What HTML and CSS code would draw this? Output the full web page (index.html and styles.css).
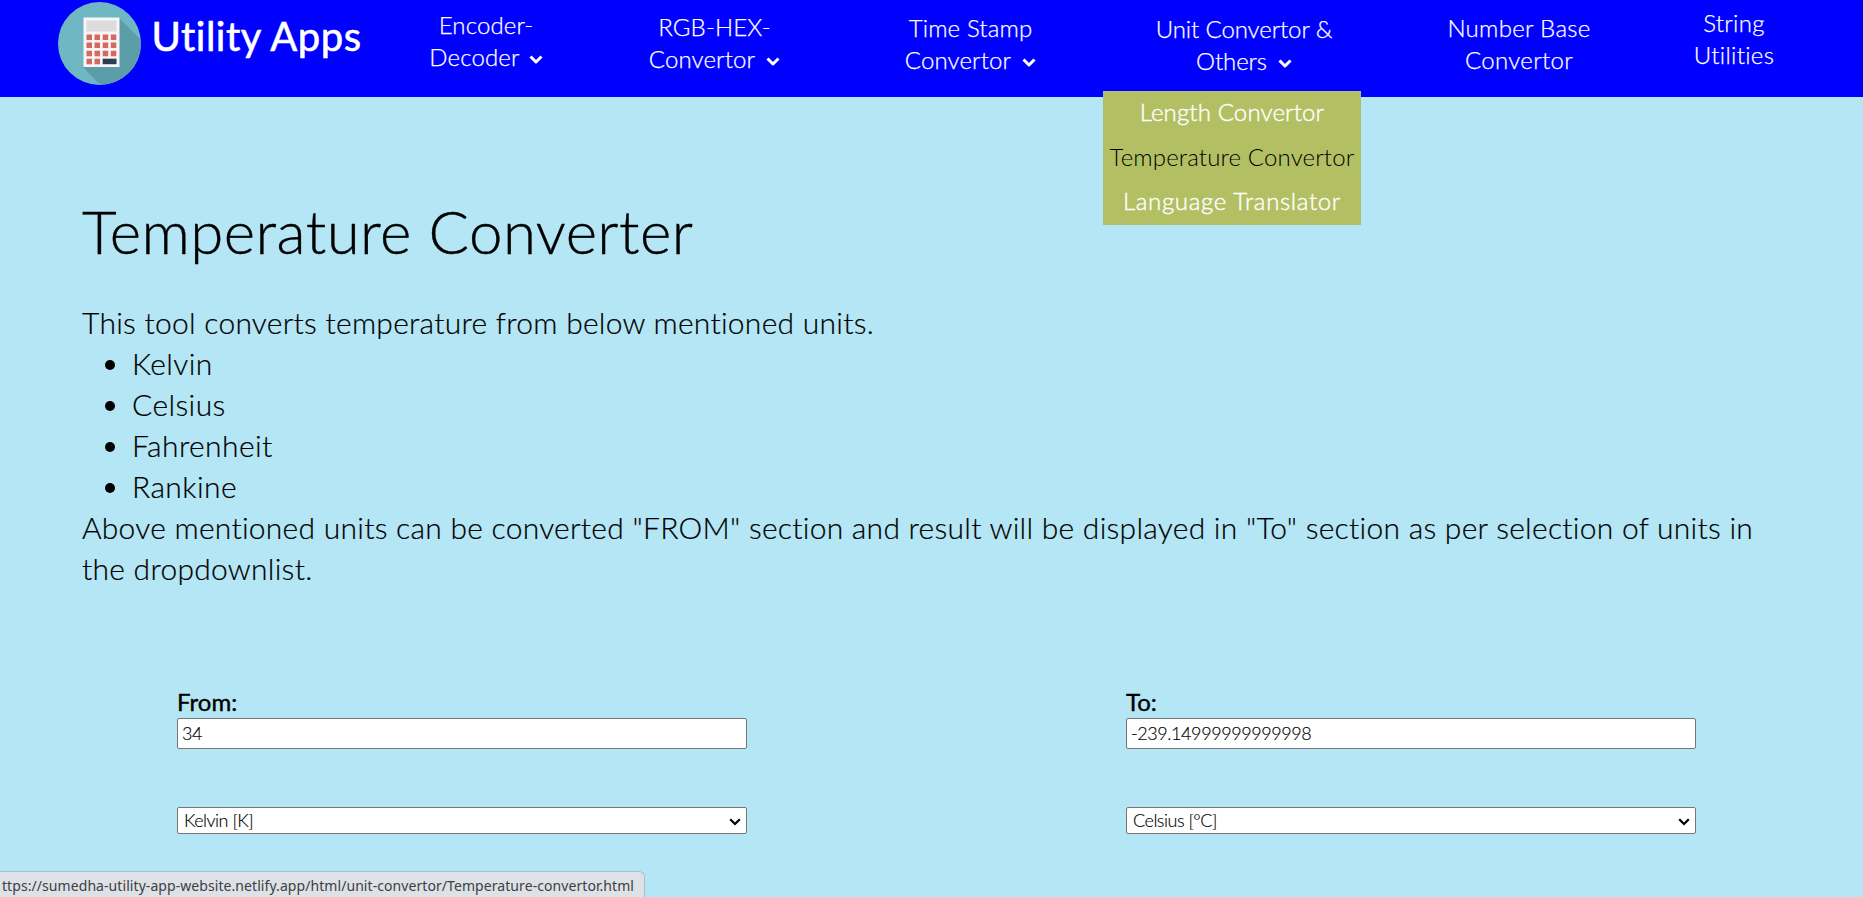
FILE: index.html
```html
<!DOCTYPE html>
<html lang="en">
<head>
<meta charset="utf-8">
<title>Temperature Converter</title>
<link rel="stylesheet" href="styles.css">
</head>
<body>
<header class="header">
  <a class="brand">
    <svg class="logo" viewBox="0 0 83 83" width="83" height="83">
      <defs><clipPath id="disc"><circle cx="41.5" cy="41.5" r="41.5"/></clipPath></defs>
      <g clip-path="url(#disc)">
        <rect width="83" height="83" fill="#6fb8c3"/>
        <path d="M61 16 L88 43 V88 H47 L25 65 Z" fill="#5b9da8"/>
        <rect x="25.5" y="15.5" width="36" height="49.5" fill="#f7f5f5"/>
        <rect x="28.5" y="18.5" width="30" height="11" fill="#dcdbdd"/>
        <g fill="#d5695f">
          <path d="M28.5 32.5h5.5v5.500h-5.500zM36.500 32.500h5.500v5.500h-5.500zM44.700 32.500h5.500v5.500h-5.500zM52.800 32.500h5.500v5.500h-5.500z"/>
          <path d="M28.5 40.5h5.5v5.500h-5.500zM36.500 40.500h5.500v5.500h-5.500zM44.700 40.500h5.500v5.500h-5.500zM52.800 40.500h5.500v5.500h-5.500z"/>
          <path d="M28.5 48.700h5.5v5.500h-5.500zM36.500 48.700h5.500v5.500h-5.500zM44.700 48.700h5.500v5.500h-5.500zM52.800 48.700h5.500v5.500h-5.500z"/>
          <path d="M28.5 56.700h5.5v5.500h-5.500zM36.500 56.700h5.500v5.500h-5.500z"/>
        </g>
        <rect x="44.700" y="56.700" width="13.800" height="5.500" fill="#2c3e50"/>
      </g>
    </svg>
    <span class="brand-name">Utility Apps</span>
  </a>
  <nav class="nav">
    <div class="item encoder">Encoder-<br>Decoder<svg class="chev" viewBox="0 0 14 9"><path d="M1.500 1.500 7 7 12.500 1.500"/></svg></div>
    <div class="item rgb">RGB-HEX-<br>Convertor<svg class="chev wide" viewBox="0 0 14 9"><path d="M1.500 1.500 7 7 12.500 1.500"/></svg></div>
    <div class="item time">Time Stamp<br>Convertor<svg class="chev wide" viewBox="0 0 14 9"><path d="M1.500 1.500 7 7 12.500 1.500"/></svg></div>
    <div class="item unit">Unit Convertor &amp;<br>Others<svg class="chev wide" viewBox="0 0 14 9"><path d="M1.500 1.500 7 7 12.500 1.500"/></svg>
      <div class="dropdown"><a>Length Convertor</a><a class="active">Temperature Convertor</a><a class="language">Language Translator</a></div>
    </div>
    <div class="item number">Number Base<br>Convertor</div>
    <div class="item string">String<br>Utilities</div>
  </nav>
</header>
<main class="main">
  <h1 class="title">Temperature Converter</h1>
  <div class="intro">
    <p>This tool converts temperature from below mentioned units.</p>
    <ul class="units"><li>Kelvin</li><li>Celsius</li><li>Fahrenheit</li><li>Rankine</li></ul>
    <p>Above mentioned units can be converted "FROM" section and result will be displayed in "To" section as per selection of units in<br>the dropdownlist.</p>
  </div>
  <form class="form">
    <div class="column">
      <label class="label" for="from">From:</label>
      <input class="field" id="from" value="34">
      <div class="picker"><select class="select"><option>Kelvin [K]</option></select><svg class="arrow" viewBox="0 0 12 8"><path d="M1.200 1.200 6 6 10.800 1.200"/></svg></div>
    </div>
    <div class="column">
      <label class="label" for="to">To:</label>
      <input class="field" id="to" value="-239.14999999999998">
      <div class="picker"><select class="select"><option>Celsius [°C]</option></select><svg class="arrow" viewBox="0 0 12 8"><path d="M1.200 1.200 6 6 10.800 1.200"/></svg></div>
    </div>
  </form>
</main>
<div class="status">ttps://sumedha-utility-app-website.netlify.app/html/unit-convertor/Temperature-convertor.html</div>
</body>
</html>
```
FILE: styles.css
```css
* { box-sizing: border-box; margin: 0; padding: 0; }
body { height: 897px; overflow: hidden; background: #b5e6f5; color: #000; font-family: Lato, "Open Sans", sans-serif; font-weight: 300; }
.header { display: flex; height: 97px; background: #0000ff; color: #fff; }
.brand { display: flex; flex: none; width: 400px; padding: 2px 0 0 58px; }
.logo { display: block; flex: none; }
.brand-name { margin-left: 10.500px; font-size: 40px; line-height: 69px; font-weight: 400; letter-spacing: .5px; white-space: nowrap; -webkit-text-stroke: .6px #fff; }
.nav { display: flex; font-size: 24px; line-height: 32px; letter-spacing: .15px; text-align: center; white-space: nowrap; }
.item { position: relative; -webkit-text-stroke: .25px currentColor; }
.encoder { width: 172px; padding-top: 9px; }
.rgb { width: 285px; padding-top: 11px; }
.time { width: 227px; padding-top: 12px; }
.unit { width: 320px; padding-top: 13px; letter-spacing: -.1px; }
.number { width: 230px; padding-top: 12px; letter-spacing: .3px; }
.string { width: 200px; padding-top: 7px; letter-spacing: .3px; }
.chev { width: 14px; height: 9px; margin-left: 9px; vertical-align: 2px; fill: none; stroke: #fff; stroke-width: 3; stroke-linejoin: round; }
.chev.wide { margin-left: 11px; }
.dropdown { position: absolute; left: 19px; top: 91px; width: 258px; height: 134px; background: #b2c063; display: flex; flex-direction: column; letter-spacing: .15px; }
.dropdown a { height: 44.600px; line-height: 42px; -webkit-text-stroke-width: .4px; }
.dropdown .active { color: #000; -webkit-text-stroke: 0; }
.dropdown .language { letter-spacing: .65px; }
.main { padding: 93px 82px 0; }
.title { height: 112px; line-height: 82px; font-size: 60px; font-weight: 300; letter-spacing: .45px; -webkit-text-stroke: .4px #000; }
.intro { font-size: 30px; line-height: 41px; letter-spacing: .26px; white-space: nowrap; -webkit-text-stroke: .2px #000; }
.units { padding-left: 50px; list-style: none; letter-spacing: .4px; }
.units li::before { content: ""; display: inline-block; width: 10px; height: 10px; margin: 0 17px 0 -27px; border-radius: 50%; background: #000; vertical-align: 5px; }
.form { display: flex; gap: 379px; padding: 97px 0 0 95px; }
.column { width: 570px; display: flex; flex-direction: column; }
.label { height: 32px; line-height: 32px; font-size: 24px; font-weight: 400; -webkit-text-stroke: .4px #000; }
.field, .select { display: block; width: 570px; border: 1px solid #767676; border-radius: 2px; background: #fff; color: #000; font: 300 18px Lato, "Open Sans", sans-serif; -webkit-text-stroke: .15px #000; }
.field { height: 31px; padding: 0 5px 2px 4px; letter-spacing: -.42px; }
.picker { position: relative; margin-top: 58px; }
.select { height: 27px; padding: 0 20px 2px 6px; letter-spacing: -.5px; appearance: none; }
.arrow { position: absolute; right: 6px; top: 11px; width: 12px; height: 8px; fill: none; stroke: #000; stroke-width: 2.200; }
.status { position: absolute; left: -1px; bottom: 0; width: 646px; height: 26px; padding-left: 2px; border: 1px solid #a3c3cf; border-bottom: 0; border-radius: 0 6px 0 0; background: #dee1e6; color: #3c4043; font: 14px/27px "Noto Sans", sans-serif; letter-spacing: .07px; white-space: nowrap; }
```
